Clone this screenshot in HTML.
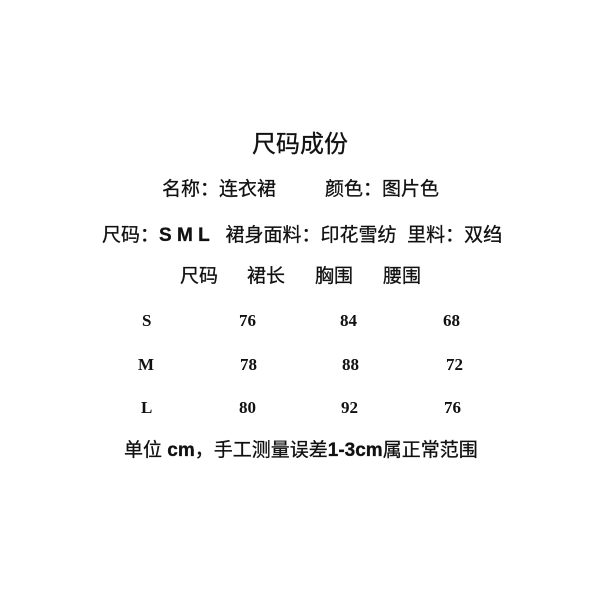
<!DOCTYPE html>
<html><head><meta charset="utf-8"><style>
body{margin:0;width:596px;height:596px;background:#fff;position:relative;overflow:hidden;color:#111}
div{position:absolute;white-space:nowrap;font-family:"Liberation Sans","WenQuanYi Zen Hei","Noto Sans CJK SC",sans-serif;line-height:1}
.t{font-size:24px;top:133px;left:252px;-webkit-text-stroke:0.3px #111}
.a{font-size:19px;-webkit-text-stroke:0.3px #111}
.n{font-family:"Liberation Serif",serif;font-weight:bold;font-size:17px}
b{font-weight:bold}
i{font-style:normal;display:inline-block;width:19px;text-align:center}
</style></head><body>
<div class="t">尺码成份</div>
<div class="a" style="left:162px;top:180px">名称<i>：</i>连衣裙</div>
<div class="a" style="left:325px;top:180px">颜色<i>：</i>图片色</div>
<div class="a" style="left:102px;top:226px">尺码<i>：</i><b>S M L</b>&nbsp;&nbsp;&nbsp;裙身面料<i>：</i>印花雪纺&nbsp; 里料<i>：</i>双绉</div>
<div class="a" style="left:180px;top:267px">尺码</div>
<div class="a" style="left:247px;top:267px">裙长</div>
<div class="a" style="left:315px;top:267px">胸围</div>
<div class="a" style="left:383px;top:267px">腰围</div>
<div class="n" style="left:142px;top:312px">S</div>
<div class="n" style="left:239px;top:312px">76</div>
<div class="n" style="left:340px;top:312px">84</div>
<div class="n" style="left:443px;top:312px">68</div>
<div class="n" style="left:138px;top:356px">M</div>
<div class="n" style="left:240px;top:356px">78</div>
<div class="n" style="left:342px;top:356px">88</div>
<div class="n" style="left:446px;top:356px">72</div>
<div class="n" style="left:141px;top:399px">L</div>
<div class="n" style="left:239px;top:399px">80</div>
<div class="n" style="left:341px;top:399px">92</div>
<div class="n" style="left:444px;top:399px">76</div>
<div class="a" style="left:124px;top:441px">单位 <b>cm</b><i>，</i>手工测量误差<b>1-3cm</b>属正常范围</div>
</body></html>
